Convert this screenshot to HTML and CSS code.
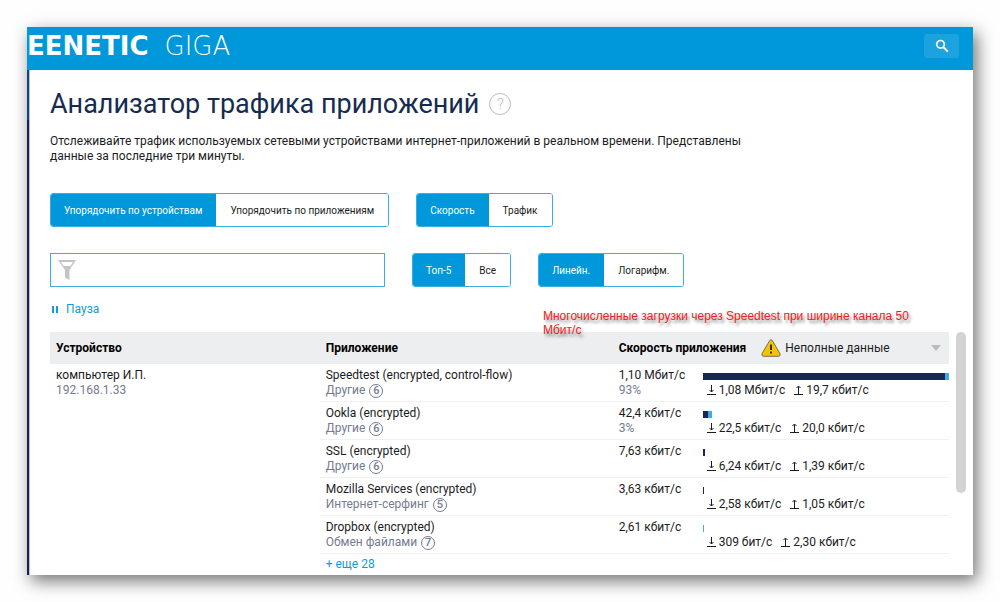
FILE: index.html
```html
<!DOCTYPE html>
<html lang="ru">
<head>
<meta charset="utf-8">
<title>Анализатор трафика приложений</title>
<link rel="stylesheet" href="styles.css">
</head>
<body>
<svg class="sprite" aria-hidden="true">
  <symbol id="down" viewBox="0 0 9 10"><path d="M4.500 0v7M2.500 5l2 2 2-2M0 9.500h9" fill="none" stroke="currentColor"/></symbol>
  <symbol id="up" viewBox="0 0 9 10"><path d="M4.500 9.500v-8M2.500 3l2-2 2 2M0 9.500h9" fill="none" stroke="currentColor"/></symbol>
</svg>
<div class="window">
  <header class="topbar">
    <div class="logo"><span class="brand">EENETIC</span><span class="model">GIGA</span></div>
    <button class="search" type="button" aria-label="Поиск">
      <svg width="14" height="14" viewBox="0 0 14 14"><circle cx="5.500" cy="5.300" r="3.800" fill="none" stroke="#fff" stroke-width="1.700"/><path d="M8.200 8l4.600 4.600" stroke="#fff" stroke-width="2"/></svg>
    </button>
  </header>
  <div class="body">
    <div class="rail"></div>
    <main class="main">
      <div class="heading">
        <h1>Анализатор трафика приложений</h1>
        <button class="help" type="button" aria-label="Справка">?</button>
      </div>
      <p class="lead">Отслеживайте трафик используемых сетевыми устройствами интернет-приложений в реальном времени. Представлены данные за последние три минуты.</p>
      <div class="controls">
        <div class="segment"><button class="on" type="button">Упорядочить по устройствам</button><button type="button">Упорядочить по приложениям</button></div>
        <div class="segment"><button class="on" type="button">Скорость</button><button type="button">Трафик</button></div>
      </div>
      <div class="controls">
        <label class="filter">
          <svg width="18" height="20" viewBox="0 0 18 20"><path d="M0 0h18l-6.500 10V20L7 17.500V10z" fill="#c2c4c7"/><path d="M3 2h12l-2.600 4H5.600z" fill="#fff"/></svg>
          <input type="text" aria-label="Фильтр">
        </label>
        <div class="segment"><button class="on" type="button">Топ-5</button><button type="button">Все</button></div>
        <div class="segment"><button class="on" type="button">Линейн.</button><button type="button">Логарифм.</button></div>
      </div>
      <div class="pause-row">
        <button class="pause" type="button"><svg width="6" height="7" viewBox="0 0 6 7"><path d="M0 0h2v7H0zM4 0h2v7H4z" fill="currentColor"/></svg>Пауза</button>
        <p class="note">Многочисленные загрузки через Speedtest при ширине канала 50 Мбит/с</p>
      </div>
      <div class="list">
        <table class="traffic">
          <colgroup><col class="c-device"><col class="c-app"><col class="c-speed"><col class="c-chart"></colgroup>
          <thead>
            <tr>
              <th scope="col">Устройство</th>
              <th scope="col">Приложение</th>
              <th scope="col" colspan="2">
                <div class="speed-head">Скорость приложения
                  <span class="warning"><svg width="20" height="18" viewBox="0 0 20 18"><path d="M8.700 1.500Q10-.3 11.300 1.500L19 14.700Q19.600 17.300 17.500 17.300H2.500Q.4 17.300 1 14.700z" fill="#f5c400" stroke="#77715b" stroke-width="1"/><path d="M10 5.500v5.500M10 12.500v2" stroke="#222" stroke-width="1.800"/></svg>Неполные данные</span>
                  <svg class="caret" width="10" height="6" viewBox="0 0 10 6"><path d="M0 0h10L5 6z" fill="#b9bbbe"/></svg>
                </div>
              </th>
            </tr>
          </thead>
          <tbody>
            <tr>
              <td class="device" rowspan="6">компьютер И.П.<br><span class="muted">192.168.1.33</span></td>
              <td>Speedtest (encrypted, control-flow)<div class="muted kind">Другие <span class="level">6</span></div></td>
              <td>1,10 Мбит/с<div class="muted">93%</div></td>
              <td class="chart"><div class="bar"><i class="rx" style="width:98.300%"></i><i class="tx" style="width:1.700%"></i></div><div class="rates"><span><svg><use href="#down"/></svg>1,08 Мбит/с</span><span><svg><use href="#up"/></svg>19,7 кбит/с</span></div></td>
            </tr>
            <tr>
              <td>Ookla (encrypted)<div class="muted kind">Другие <span class="level">6</span></div></td>
              <td>42,4 кбит/с<div class="muted">3%</div></td>
              <td class="chart"><div class="bar"><i class="rx" style="width:2%"></i><i class="tx" style="width:1.700%"></i></div><div class="rates"><span><svg><use href="#down"/></svg>22,5 кбит/с</span><span><svg><use href="#up"/></svg>20,0 кбит/с</span></div></td>
            </tr>
            <tr>
              <td>SSL (encrypted)<div class="muted kind">Другие <span class="level">6</span></div></td>
              <td>7,63 кбит/с</td>
              <td class="chart"><div class="bar"><i class="rx" style="width:0.800%"></i></div><div class="rates"><span><svg><use href="#down"/></svg>6,24 кбит/с</span><span><svg><use href="#up"/></svg>1,39 кбит/с</span></div></td>
            </tr>
            <tr>
              <td>Mozilla Services (encrypted)<div class="muted kind">Интернет-серфинг <span class="level">5</span></div></td>
              <td>3,63 кбит/с</td>
              <td class="chart"><div class="bar"><i class="rx" style="width:0.400%"></i></div><div class="rates"><span><svg><use href="#down"/></svg>2,58 кбит/с</span><span><svg><use href="#up"/></svg>1,05 кбит/с</span></div></td>
            </tr>
            <tr>
              <td>Dropbox (encrypted)<div class="muted kind">Обмен файлами <span class="level">7</span></div></td>
              <td>2,61 кбит/с</td>
              <td class="chart"><div class="bar"><i class="tx" style="width:0.400%"></i></div><div class="rates"><span><svg><use href="#down"/></svg>309 бит/с</span><span><svg><use href="#up"/></svg>2,30 кбит/с</span></div></td>
            </tr>
            <tr><td class="more" colspan="3"><a href="#">+ еще 28</a></td></tr>
          </tbody>
        </table>
        <div class="scrollbar"></div>
      </div>
    </main>
  </div>
</div>
</body>
</html>
```
FILE: styles.css
```css
* { box-sizing: border-box; }
body {
  margin: 0;
  padding: 27px;
  background: #fefefe;
  color: #1c1c1c;
  font: 12px/15px Roboto, "Noto Sans", sans-serif;
}
button, input { font: inherit; color: inherit; }
h1, p { margin: 0; }
.sprite { display: none; }
.window {
  background: #fff;
  box-shadow: 4px 6px 16px rgba(0, 0, 0, 0.550);
}
.topbar {
  display: flex;
  align-items: center;
  justify-content: space-between;
  height: 43px;
  padding: 0 14px 6px 0;
  background: #0098db;
  overflow: hidden;
}
.logo {
  display: flex;
  align-items: baseline;
  gap: 16px;
  color: #fff;
  font: 26px/30px "DejaVu Sans", sans-serif;
}
.brand { font-weight: bold; }
.model { font-weight: 200; }
.search {
  display: grid;
  place-items: center;
  width: 35px;
  height: 24px;
  padding: 0;
  border: 0;
  border-radius: 3px;
  background: #1ca3df;
}
.body { display: flex; }
.rail {
  width: 3px;
  border-right: 1px solid #b9c0cc;
  background: linear-gradient(#13477c 0 50px, #14264d 50px);
}
.main { flex: 1; min-width: 0; padding: 16px 7px 1px 20px; }
.heading { display: flex; align-items: center; gap: 10px; height: 36px; }
h1 { color: #162b50; font-size: 27px; line-height: 36px; font-weight: 400; }
.help {
  width: 22px;
  height: 22px;
  padding: 0;
  border: 1px solid #bdbdbd;
  border-radius: 50%;
  background: none;
  color: #bdbdbd;
  font-size: 15px;
  font-weight: 300;
}
.lead { max-width: 720px; margin-top: 12px; }
.controls { display: flex; gap: 27px; margin-top: 26px; }
.lead + .controls { margin-top: 29px; }
.segment { display: flex; height: 34px; border: 1px solid #3aaee0; border-radius: 3px; overflow: hidden; }
.segment button {
  padding: 0 14px;
  border: 0;
  background: #fff;
  font-size: 10px;
}
.segment .on { padding-left: 13px; background: #0098db; color: #fff; }
.filter {
  display: flex;
  align-items: center;
  gap: 8px;
  width: 335px;
  height: 34px;
  padding: 0 7px;
  border: 1px solid #3aaee0;
}
.filter input { flex: 1; min-width: 0; border: 0; outline: 0; background: none; }
.pause-row { position: relative; margin-top: 15px; }
.pause {
  display: flex;
  align-items: center;
  gap: 8px;
  padding: 0 2px;
  border: 0;
  background: none;
  color: #0f9cdb;
}
.note {
  position: absolute;
  left: 493px;
  top: 7px;
  width: 390px;
  color: #f21d1d;
  font: 12px/14px "Liberation Sans", sans-serif;
  text-shadow: 2px 3px 3px rgba(0, 0, 0, 0.450);
}
.list { display: flex; gap: 7px; margin-top: 15px; }
.scrollbar { width: 10px; height: 161px; border-radius: 5px; background: #d3d3d3; }
.traffic { flex: 1; width: 100%; table-layout: fixed; border-collapse: separate; border-spacing: 0; }
.c-device { width: 30%; }
.c-app { width: 32.600%; }
.c-speed { width: 10%; }
.c-chart { width: 27.400%; }
.traffic th { height: 32px; padding: 0 6px; background: #edeef0; color: #000; text-align: left; }
.speed-head { display: flex; align-items: center; gap: 15px; white-space: nowrap; }
.warning { display: flex; align-items: center; gap: 4px; color: #1c1c1c; font-weight: 400; }
.caret { margin-left: auto; margin-right: 2px; }
.traffic td { height: 38px; padding: 4px 0 3px 6px; border-bottom: 1px solid #f1f1f2; vertical-align: top; }
.traffic .device, .traffic .more { border-bottom: 0; }
.traffic .more { height: 20px; padding: 3px 0 2px 6px; }
.traffic .chart { padding-left: 0; }
.traffic a { color: #0f9cdb; text-decoration: none; }
.muted { color: #757b91; }
.kind { display: flex; align-items: center; gap: 4px; height: 15px; }
.level {
  width: 14px;
  height: 14px;
  border: 1px solid #757b91;
  border-radius: 50%;
  font-size: 11px;
  font-weight: 500;
  line-height: 12px;
  text-align: center;
}
.bar { display: flex; height: 7px; margin: 5px 0 3px; }
.rx { background: #152a4e; }
.tx { background: #3fa9ea; }
.rates { display: flex; gap: 9px; padding-left: 4px; }
.rates span { display: flex; align-items: center; gap: 3px; }
.rates svg { width: 9px; height: 10px; margin-bottom: 2px; }
```
